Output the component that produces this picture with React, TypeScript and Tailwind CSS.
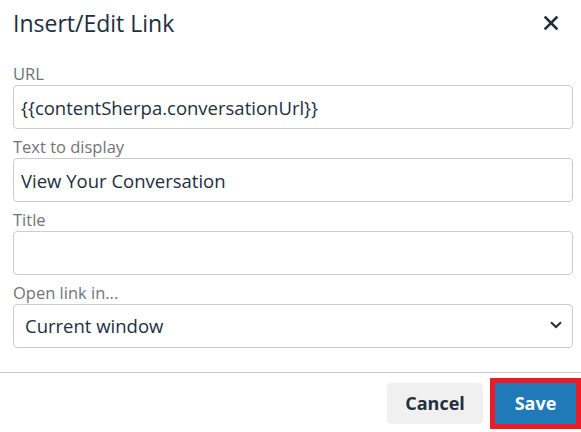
import React from 'react';

const Field: React.FC<{ label: string; children: React.ReactNode }> = ({ label, children }) => (
  <div className="flex flex-col">
    <label className="text-[16.5px] leading-[23px] text-[#6f747a]">{label}</label>
    {children}
  </div>
);

const inputCls =
  'h-[44px] w-full rounded-[4px] border border-[#cccccc] bg-white px-[7px] text-[18.5px] text-[#222f3e] outline-none';

export default function App() {
  return (
    <div className="relative h-[432px] w-[581px] overflow-hidden bg-white font-['Open_Sans',sans-serif]">
      <div className="flex h-[46px] items-center justify-between pl-[13px] pr-[18px]">
        <h1 className="text-[23px] text-[#222f3e]">Insert/Edit Link</h1>
        <button className="flex h-6 w-6 items-center justify-center text-[#222f3e]">
          <svg width="14" height="14" viewBox="0 0 14 14">
            <path d="M1.5 1.5 L12.5 12.5 M12.5 1.5 L1.5 12.5" stroke="currentColor" strokeWidth="2.6" strokeLinecap="square" />
          </svg>
        </button>
      </div>

      <div className="flex flex-col gap-[6px] pl-[13px] pr-[8px] pt-[16px]">
        <Field label="URL">
          <input className={inputCls} defaultValue="{{contentSherpa.conversationUrl}}" />
        </Field>
        <Field label="Text to display">
          <input className={inputCls} defaultValue="View Your Conversation" />
        </Field>
        <Field label="Title">
          <input className={inputCls} defaultValue="" />
        </Field>
        <Field label="Open link in...">
          <div className="relative flex h-[44px] items-center rounded-[4px] border border-[#cccccc] pl-[11px] text-[18.5px] text-[#222f3e]">
            Current window
            <svg className="absolute right-[10px] top-[16px]" width="12" height="8" viewBox="0 0 12 8">
              <path d="M1 1.2 L6 6 L11 1.2" fill="none" stroke="currentColor" strokeWidth="2" />
            </svg>
          </div>
        </Field>
      </div>

      <div className="mt-[24px] flex justify-end gap-[12px] border-t border-[#cccccc] pr-[5px] pt-[10px]">
        <button className="h-[41px] w-[96px] rounded-[4px] bg-[#f0f0f0] text-[18px] font-bold text-[#222f3e]">
          Cancel
        </button>
        <button className="h-[41px] w-[81px] bg-[#207ab7] text-[18px] font-bold text-white outline-[5px] outline-solid outline-[#ed1c24]">
          Save
        </button>
      </div>
    </div>
  );
}
